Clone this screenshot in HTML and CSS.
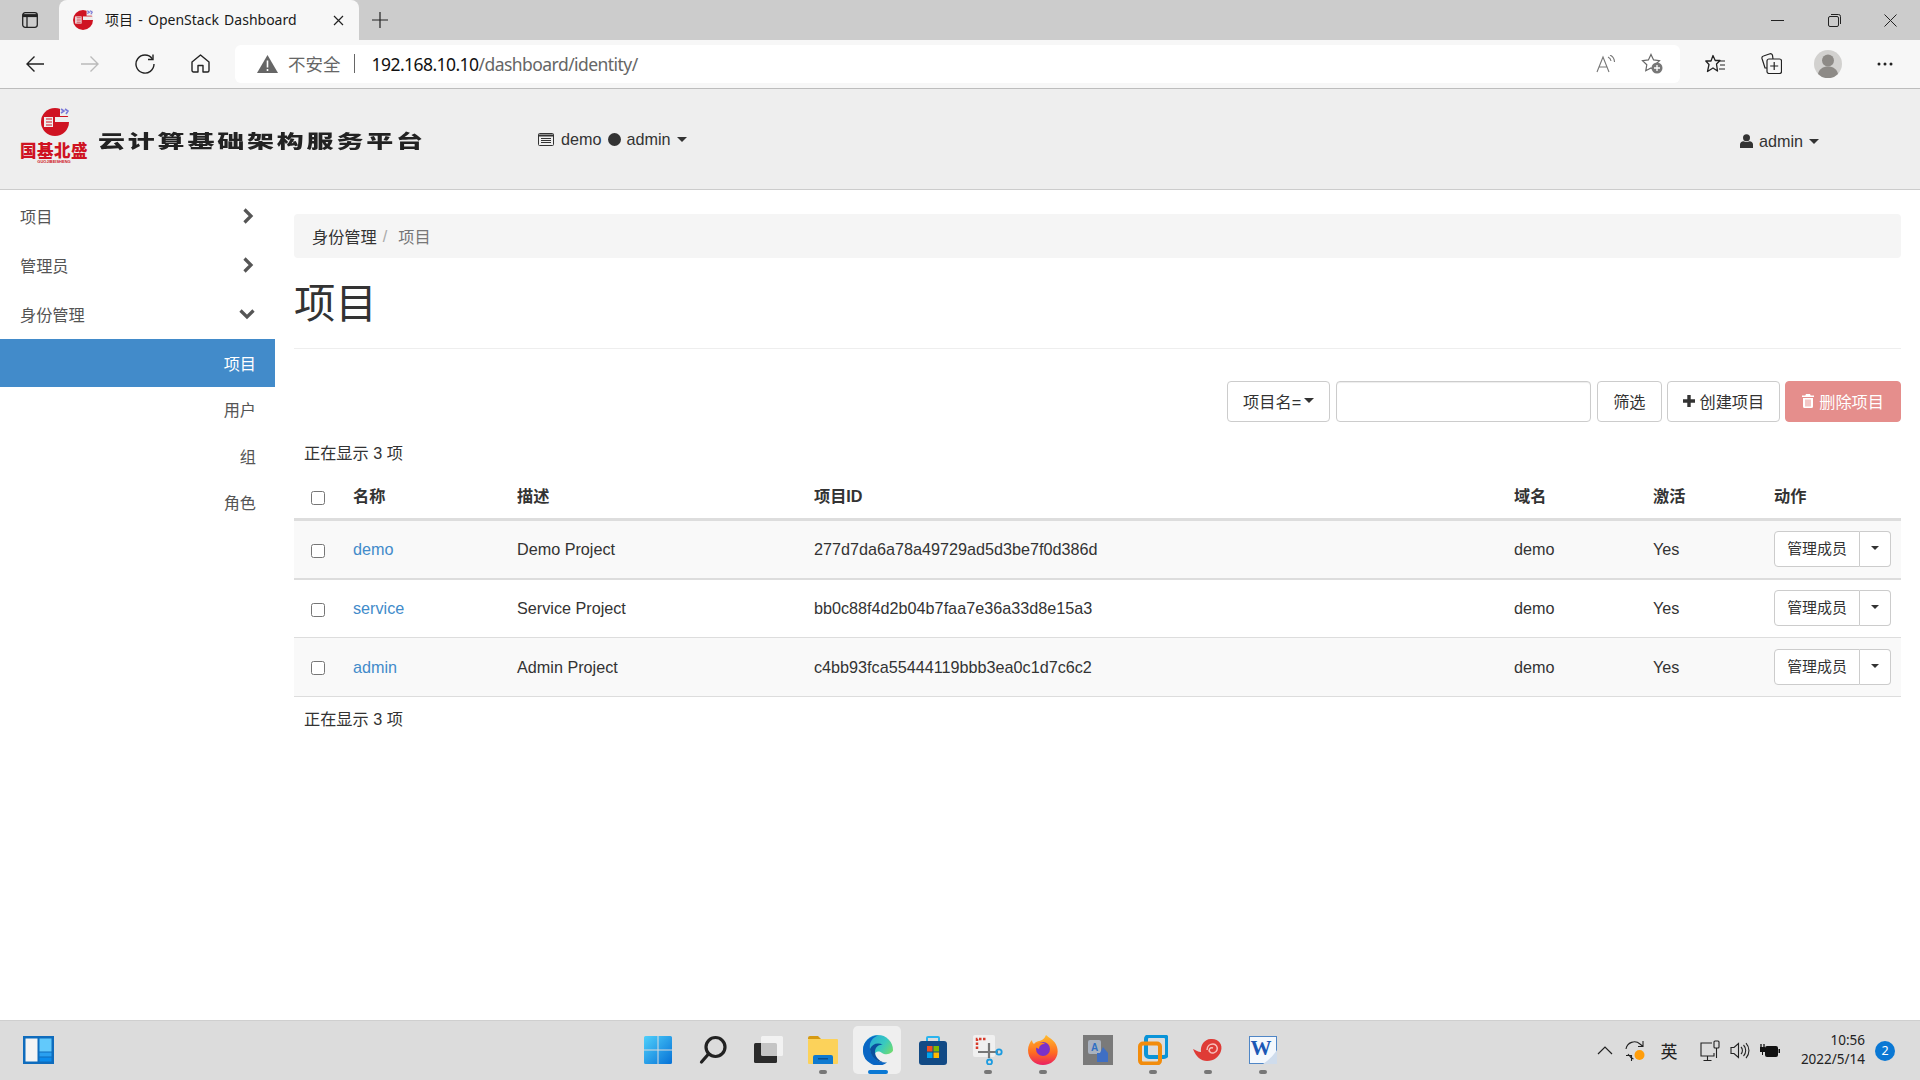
FILE: index.html
```html
<!DOCTYPE html>
<html lang="zh-CN">
<head>
<meta charset="utf-8">
<title>项目 - OpenStack Dashboard</title>
<link rel="stylesheet" href="styles.css">
</head>
<body>
<svg class="defs" width="0" height="0" aria-hidden="true">
  <symbol id="g-mark" viewBox="0 0 28 28">
    <circle cx="14" cy="14" r="14" fill="#cf1322"/>
    <rect x="14" y="9" width="15" height="5" fill="#eee"/>
    <path d="M19 0h9v8h-9z" fill="#eee"/>
    <rect x="3" y="9" width="9" height="10" fill="#eee"/>
    <path d="M5 11h6M5 14h6M5 17h6" stroke="#cf1322" stroke-width="1.2"/>
    <path d="M20 1l3 2-3 2M24 1l3 2-2 3" stroke="#7a78d8" stroke-width="1.6" fill="none"/>
  </symbol>
</svg>

<div class="tabbar">
  <div class="tab-actions">
    <svg width="16" height="16" viewBox="0 0 16 16" fill="none" stroke="#222" stroke-width="1.3"><rect x=".7" y=".7" width="14.6" height="14.6" rx="2.5"/><path d="M.7 3.6h14.6" stroke-width="3"/><path d="M5 4v11"/></svg>
  </div>
  <div class="tab">
    <svg class="favicon" width="20" height="20"><use href="#g-mark"/></svg>
    <span class="tab-title">项目 - OpenStack Dashboard</span>
    <svg class="tab-close" width="11" height="11" viewBox="0 0 11 11" stroke="#222" stroke-width="1.2"><path d="M1 1l9 9M10 1l-9 9"/></svg>
  </div>
  <div class="tab-new">
    <svg width="16" height="16" viewBox="0 0 16 16" stroke="#222" stroke-width="1.2"><path d="M8 0v16M0 8h16"/></svg>
  </div>
  <div class="win-buttons">
    <div class="win-btn"><svg width="13" height="13" viewBox="0 0 13 13" stroke="#222" stroke-width="1"><path d="M0 6.5h13"/></svg></div>
    <div class="win-btn"><svg width="13" height="13" viewBox="0 0 13 13" fill="none" stroke="#222" stroke-width="1"><rect x=".5" y="2.5" width="10" height="10" rx="1.5"/><path d="M3 .5h7.5a2 2 0 0 1 2 2V10"/></svg></div>
    <div class="win-btn"><svg width="13" height="13" viewBox="0 0 13 13" stroke="#222" stroke-width="1"><path d="M.5.5l12 12M12.5.5l-12 12"/></svg></div>
  </div>
</div>

<div class="toolbar">
  <div class="nav-btn"><svg width="20" height="18" viewBox="0 0 20 18" fill="none" stroke="#222" stroke-width="1.4"><path d="M19 9H2M9.500 1.500L2 9l7.500 7.500"/></svg></div>
  <div class="nav-btn"><svg width="20" height="18" viewBox="0 0 20 18" fill="none" stroke="#bbb" stroke-width="1.4"><path d="M1 9h17M10.500 1.500L18 9l-7.500 7.500"/></svg></div>
  <div class="nav-btn"><svg width="20" height="20" viewBox="0 0 20 20" fill="none" stroke="#222" stroke-width="1.4"><path d="M17.300 4.800A9 9 0 1 0 19 10"/><path d="M18 .5v5h-5"/></svg></div>
  <div class="nav-btn"><svg width="19" height="19" viewBox="0 0 19 19" fill="none" stroke="#222" stroke-width="1.4"><path d="M1 8l8.500-7L18 8v8.500a1.500 1.500 0 0 1-1.500 1.500H12v-6.500H7V18H2.500A1.500 1.500 0 0 1 1 16.500z" stroke-linejoin="round"/></svg></div>
  <div class="address">
    <svg class="warn" width="21" height="18" viewBox="0 0 21 18"><path d="M10.500 0L21 18H0z" fill="#666"/><path d="M9.700 5.500h1.600v7H9.700zM9.700 14h1.600v2H9.700z" fill="#fff"/></svg>
    <span class="insecure">不安全</span>
    <span class="addr-sep"></span>
    <span class="url"><span class="url-host">192.168.10.10</span>/dashboard/identity/</span>
    <span class="addr-right">
      <svg width="20" height="18" viewBox="0 0 20 18" fill="none" stroke="#777" stroke-width="1.1"><path d="M1 17L7 2l6 15M3 12h8"/><path d="M12 2a5 5 0 0 1 3 4M14 0a8 8 0 0 1 4.500 7"/></svg>
      <svg width="22" height="21" viewBox="0 0 22 21"><path d="M10 1.500l2.600 5.400 5.900.8-4.300 4.100 1 5.900L10 14.900l-5.200 2.800 1-5.900L1.500 7.700l5.900-.8z" fill="none" stroke="#666" stroke-width="1.2"/><circle cx="16" cy="15" r="5.500" fill="#777"/><path d="M13 15h6M16 12v6" stroke="#fff" stroke-width="1.300"/></svg>
    </span>
  </div>
  <div class="tool-btn tool-first"><svg width="21" height="20" viewBox="0 0 21 20" fill="none" stroke="#222" stroke-width="1.3"><path d="M8 1.500l2.200 5H15l-3.500 3.500 1 7-4.500-3-5.500 3.500L4 10.500.8 7H6z" stroke-linejoin="round"/><path d="M14 7h6M15 11h5M14 15h6" stroke-width="1"/></svg></div>
  <div class="tool-btn"><svg width="21" height="21" viewBox="0 0 21 21" fill="none" stroke="#222" stroke-width="1.2"><rect x="6" y="6" width="14.500" height="14.500" rx="2"/><path d="M13.200 9v8M9.200 13h8"/><path d="M6 15H4L1 5.500A2 2 0 0 1 2.500 3L9 .8a2 2 0 0 1 2.500 1.500L12 6"/></svg></div>
  <div class="tool-btn"><svg width="28" height="28" viewBox="0 0 28 28"><circle cx="14" cy="14" r="14" fill="#d2d1cf"/><circle cx="14" cy="10.500" r="6" fill="#8d8a86"/><path d="M4 24c1-5 5-7.500 10-7.500S23 19 24 24a14 14 0 0 1-20 0z" fill="#8d8a86"/></svg></div>
  <div class="tool-btn"><svg width="16" height="4" viewBox="0 0 16 4" fill="#222"><circle cx="2" cy="2" r="1.500"/><circle cx="8" cy="2" r="1.500"/><circle cx="14" cy="2" r="1.500"/></svg></div>
</div>

<header class="site-header">
  <div class="brand">
    <svg class="brand-logo" width="72" height="56" viewBox="0 0 72 56">
      <use href="#g-mark" x="23" y="0" width="28" height="28"/>
      <text class="logo-cn" x="36" y="49" text-anchor="middle">国基北盛</text>
      <text class="logo-en" x="36" y="55" text-anchor="middle">GUOJIBEISHENG</text>
    </svg>
    <span class="brand-name">云计算基础架构服务平台</span>
  </div>
  <div class="project-menu">
    <svg class="menu-ico" width="16" height="13" viewBox="0 0 16 13"><rect x=".5" y=".5" width="15" height="12" rx="1" fill="none" stroke="#333"/><path d="M.5 2.500h15" stroke="#333" stroke-width="2"/><path d="M3 5.500h10M3 7.500h10M3 9.500h10" stroke="#333"/></svg>
    <span>demo</span><i class="dot"></i><span>admin</span><i class="caret"></i>
  </div>
  <div class="user-menu">
    <svg width="13" height="14" viewBox="0 0 13 14" fill="#333"><circle cx="6.500" cy="3.800" r="3.500"/><path d="M0 14v-3.500C0 8.500 1.500 7.500 3.500 7.200c1.800 1 4.200 1 6 0 2 .3 3.500 1.300 3.500 3.300V14z"/></svg>
    <span>admin</span><i class="caret"></i>
  </div>
</header>

<div class="main">
  <nav class="sidebar">
    <div class="nav-item"><span>项目</span><svg width="12" height="16" viewBox="0 0 12 16" fill="none" stroke="#555" stroke-width="3.200"><path d="M2.500 1.500L9 8l-6.500 6.500"/></svg></div>
    <div class="nav-item"><span>管理员</span><svg width="12" height="16" viewBox="0 0 12 16" fill="none" stroke="#555" stroke-width="3.200"><path d="M2.500 1.500L9 8l-6.500 6.500"/></svg></div>
    <div class="nav-item"><span>身份管理</span><svg class="chev-down" width="16" height="12" viewBox="0 0 16 12" fill="none" stroke="#555" stroke-width="3.200"><path d="M1.500 2.500L8 9l6.500-6.500"/></svg></div>
    <div class="sub-item active">项目</div>
    <div class="sub-item">用户</div>
    <div class="sub-item">组</div>
    <div class="sub-item">角色</div>
  </nav>

  <main class="content">
    <div class="breadcrumb"><span class="crumb">身份管理</span><span class="crumb-sep">/</span><span class="crumb-cur">项目</span></div>
    <div class="page-header"><h1>项目</h1></div>

    <div class="actions">
      <button class="btn">项目名=<i class="caret caret-near"></i></button>
      <input class="filter-input" type="text">
      <button class="btn">筛选</button>
      <button class="btn btn-gap"><svg width="12" height="12" viewBox="0 0 12 12" fill="#333"><path d="M4.300 0h3.400v4.300H12v3.400H7.700V12H4.300V7.700H0V4.300h4.300z"/></svg>创建项目</button>
      <button class="btn btn-gap btn-danger"><svg width="12" height="14" viewBox="0 0 12 14" fill="#fff"><path d="M4 0h4l.7 1.500H12V3H0V1.500h3.300zM1 4h10v8.500A1.500 1.500 0 0 1 9.500 14h-7A1.500 1.500 0 0 1 1 12.500z"/><path d="M4 5.500v7M6 5.500v7M8 5.500v7" stroke="#e58e8c"/></svg>删除项目</button>
    </div>

    <div class="count">正在显示 3 项</div>

    <table class="projects">
      <colgroup>
        <col class="c-check"><col class="c-name"><col class="c-desc"><col class="c-id"><col class="c-domain"><col class="c-active"><col>
      </colgroup>
      <thead>
        <tr><th class="check"><input type="checkbox"></th><th>名称</th><th>描述</th><th>项目ID</th><th>域名</th><th>激活</th><th>动作</th></tr>
      </thead>
      <tbody>
        <tr class="striped first">
          <td class="check"><input type="checkbox"></td><td><a href="#">demo</a></td><td>Demo Project</td><td>277d7da6a78a49729ad5d3be7f0d386d</td><td>demo</td><td>Yes</td>
          <td><div class="row-action"><button class="ra-main">管理成员</button><button class="ra-toggle"><i class="caret"></i></button></div></td>
        </tr>
        <tr>
          <td class="check"><input type="checkbox"></td><td><a href="#">service</a></td><td>Service Project</td><td>bb0c88f4d2b04b7faa7e36a33d8e15a3</td><td>demo</td><td>Yes</td>
          <td><div class="row-action"><button class="ra-main">管理成员</button><button class="ra-toggle"><i class="caret"></i></button></div></td>
        </tr>
        <tr class="striped last">
          <td class="check"><input type="checkbox"></td><td><a href="#">admin</a></td><td>Admin Project</td><td>c4bb93fca55444119bbb3ea0c1d7c6c2</td><td>demo</td><td>Yes</td>
          <td><div class="row-action"><button class="ra-main">管理成员</button><button class="ra-toggle"><i class="caret"></i></button></div></td>
        </tr>
      </tbody>
    </table>

    <div class="count count-bottom">正在显示 3 项</div>
  </main>
</div>

<footer class="taskbar">
  <div class="tb-left">
    <svg width="31" height="28" viewBox="0 0 31 28"><rect width="31" height="28" fill="#0f6cbd"/><rect x="2.500" y="2.500" width="12" height="23" fill="#f4f4f4"/><rect x="16.500" y="2.500" width="12" height="13" fill="#62c9fb"/><rect x="16.500" y="16.500" width="12" height="4" fill="#2aa0f0"/><rect x="16.500" y="21.500" width="12" height="4" fill="#0c8cec"/></svg>
  </div>
  <div class="tb-center">
    <div class="tb-icon"><svg width="30" height="30" viewBox="0 0 30 30"><defs><linearGradient id="w" x1="0" y1="0" x2="1" y2="1"><stop offset="0" stop-color="#4fd0fb"/><stop offset="1" stop-color="#0671d6"/></linearGradient></defs><path d="M1 2.500A1.500 1.500 0 0 1 2.500 1H14.500V14.500H1zM15.500 1H27.500A1.500 1.500 0 0 1 29 2.500V14.500H15.500zM1 15.500H14.500V29H2.500A1.500 1.500 0 0 1 1 27.500zM15.500 15.500H29V27.500A1.500 1.500 0 0 1 27.500 29H15.500z" fill="url(#w)"/></svg></div>
    <div class="tb-icon"><svg width="28" height="30" viewBox="0 0 28 30" fill="none" stroke="#222" stroke-width="3.200" stroke-linecap="round"><circle cx="16.500" cy="12" r="9.500"/><path d="M9.500 19L2.500 27"/></svg></div>
    <div class="tb-icon"><svg width="30" height="30" viewBox="0 0 30 30"><rect x="1" y="8" width="23" height="20" rx="1.500" fill="#2b2b2b"/><rect x="8" y="1" width="22" height="20" rx="1.500" fill="#fafafa" fill-opacity=".75"/></svg></div>
    <div class="tb-icon tb-open"><svg width="30" height="28" viewBox="0 0 30 28"><path d="M0 2a2 2 0 0 1 2-2h8l3 3h-13z" fill="#d69a12"/><rect y="3" width="30" height="25" rx="1" fill="#fcd25a"/><path d="M5 28v-7a2 2 0 0 1 2-2h16a2 2 0 0 1 2 2v7z" fill="#0f7ad0"/><rect x="10" y="22" width="10" height="1.500" fill="#0a4f8f"/></svg></div>
    <div class="tb-icon tb-active"><svg width="30" height="30" viewBox="0 0 30 30"><defs><linearGradient id="e1" x1="0" y1="0" x2="1" y2=".7"><stop offset="0" stop-color="#1f9fe0"/><stop offset=".6" stop-color="#38c9c0"/><stop offset="1" stop-color="#7fe05a"/></linearGradient></defs><circle cx="15" cy="15" r="15" fill="url(#e1)"/><path d="M30.500 15.500C27 20 22 20 19 18 15 15 11 17 12 21 13 26 19 30 26 27L31 31z" fill="#efefef"/><path d="M0 15C0 7 7 .5 15 .5 8 3 6 9 7 14 8 22 15 28.500 24 27.500A15 15 0 0 1 0 15z" fill="#0a66c4"/><path d="M7 14c2-5 8-7 13-4-4-1-8 2-8 7 0 5 4 9 9 10.500C13 27 7.500 21 7 14z" fill="#0b4f9e"/></svg></div>
    <div class="tb-icon"><svg width="30" height="30" viewBox="0 0 30 30" fill="none"><path d="M9 7V3a1 1 0 0 1 1-1h10a1 1 0 0 1 1 1v4" stroke="#2bb4ee" stroke-width="2"/><rect x="1" y="6" width="28" height="24" rx="3" fill="#124a85"/><rect x="9" y="11" width="5.500" height="5.500" fill="#f25022"/><rect x="15.500" y="11" width="5.500" height="5.500" fill="#7fba00"/><rect x="9" y="17.500" width="5.500" height="5.500" fill="#00a4ef"/><rect x="15.500" y="17.500" width="5.500" height="5.500" fill="#ffb900"/></svg></div>
    <div class="tb-icon tb-open"><svg width="30" height="30" viewBox="0 0 30 30" fill="none"><rect x="0" y="0" width="22" height="22" rx="2" fill="#f0f0f0"/><path d="M4 14V4h10" stroke="#d83b2b" stroke-width="2.500" stroke-dasharray="2.500 1.500"/><path d="M16 8v15M5 17h20" stroke="#777" stroke-width="2.200"/><circle cx="26" cy="17" r="2.700" stroke="#1b9be0" stroke-width="1.800"/><circle cx="16.500" cy="27" r="2.500" stroke="#1b9be0" stroke-width="1.800"/></svg></div>
    <div class="tb-icon tb-open"><svg width="30" height="30" viewBox="0 0 30 30"><defs><linearGradient id="ff" x1="0" y1="0" x2="0" y2="1"><stop offset="0" stop-color="#ffbd2e"/><stop offset=".6" stop-color="#ff6a21"/><stop offset="1" stop-color="#ea1f63"/></linearGradient></defs><path d="M18 0c3 3 9 5 11 12 3 11-5 18-14 18C7 30 0 24 0 15 0 11 2 7 4 5c0 2 1 3 2 4 2-3 6-3 8-4 2-1 3-3 4-5z" fill="url(#ff)"/><circle cx="15" cy="14" r="7" fill="#7a31c9"/><path d="M6 10c3-3 8-3 11-1-4 0-6 2-6 5-2-1-4-2-5-4z" fill="#ff8a1e"/></svg></div>
    <div class="tb-icon"><svg width="30" height="30" viewBox="0 0 30 30"><rect width="30" height="30" fill="#7a7a7a"/><rect x="5" y="5" width="13" height="14" rx="2" fill="#a9b2bf"/><text class="ime-a" x="11.500" y="16" text-anchor="middle">A</text><path d="M14 18h11v9h-11z" fill="#3f6fc4"/><path d="M20 12l5 6h-8z" fill="#3f6fc4"/></svg></div>
    <div class="tb-icon tb-open"><svg width="30" height="30" viewBox="0 0 30 30" fill="none"><rect x="8" y="1" width="21" height="21" rx="3" stroke="#0a94d8" stroke-width="4"/><rect x="2" y="8.500" width="20" height="20" rx="3" stroke="#f28c0c" stroke-width="4"/></svg></div>
    <div class="tb-icon tb-open"><svg width="30" height="26" viewBox="0 0 30 26" fill="none"><path d="M0 12c3 1 5 3 8 3-1-7 4-14 11-13 7 0 11 6 9 12-2 6-7 10-14 10C8 24 3 20 0 12z" fill="#df3b36"/><path d="M14 13c0-4 3-6 6-6s5 3 4 6-5 4-7 2 0-5 3-4" stroke="#f7bfbb" stroke-width="1.500"/></svg></div>
    <div class="tb-icon tb-open"><svg width="28" height="28" viewBox="0 0 28 28"><rect x=".5" y=".5" width="27" height="27" fill="#f4f8fd" stroke="#4f86c6"/><path d="M14 28c5-3 9-7 14-14v14z" fill="#cfdcec"/><text class="word-w" x="12" y="19" text-anchor="middle">W</text></svg></div>
  </div>
  <div class="tb-right">
    <div class="tray"><svg width="16" height="9" viewBox="0 0 16 9" fill="none" stroke="#222" stroke-width="1.200"><path d="M1 8l7-7 7 7"/></svg></div>
    <div class="tray"><svg width="21" height="22" viewBox="0 0 21 22" fill="none"><path d="M1 9a8.500 8.500 0 0 1 14-5l3 2.500M18 1v5.500h-5M3 14l2.500 3a8 8 0 0 0 3 2M1 15.500h5.500V21" stroke="#222" stroke-width="1.100"/><circle cx="14.500" cy="15" r="5" fill="#ff9d0a"/></svg></div>
    <div class="tray tray-lang">英</div>
    <div class="tray tray-monitor"><svg width="20" height="21" viewBox="0 0 20 21" fill="none" stroke="#222" stroke-width="1.100"><path d="M12 3H1v13h13v-3M7.500 16v4M3.500 20.500h8"/><rect x="14" y="1" width="5" height="7" rx="1"/><path d="M16.500 8v10"/></svg></div>
    <div class="tray"><svg width="20" height="17" viewBox="0 0 20 17" fill="none" stroke="#222" stroke-width="1.100"><path d="M1 5.500h3L8.500 1.500v14L4 11.500H1zM11 5a5 5 0 0 1 0 7M13.500 3a8 8 0 0 1 0 11M16 1a11 11 0 0 1 0 15"/></svg></div>
    <div class="tray"><svg width="20" height="14" viewBox="0 0 20 14"><path d="M1 3V0M4 3V0" stroke="#111" stroke-width="1.300"/><rect y="3" width="5" height="5" fill="#111"/><path d="M2.500 8v3" stroke="#111"/><path d="M5 4a2 2 0 0 1 2-2h9a2 2 0 0 1 2 2v7a2 2 0 0 1-2 2H7a2 2 0 0 1-2-2z" fill="#111"/><rect x="18.500" y="5" width="1.500" height="4" fill="#111"/></svg></div>
    <div class="clock"><div>10:56</div><div>2022/5/14</div></div>
    <div class="badge">2</div>
  </div>
</footer>
</body>
</html>
```

FILE: styles.css
```css
* { box-sizing: border-box; }
html, body { margin: 0; height: 100%; }
body {
  width: 1920px; height: 1080px; overflow: hidden;
  display: flex; flex-direction: column;
  font-family: "Liberation Sans", "Noto Sans CJK SC", sans-serif;
  font-size: 16.2px; color: #333; background: #fff;
}
.defs { position: absolute; }

/* browser chrome */
.tabbar { height: 40px; background: #ccc; display: flex; flex: none; }
.tab-actions { width: 59px; display: flex; align-items: center; justify-content: center; }
.tab {
  width: 300px; background: #f7f7f7; border-radius: 8px 8px 0 0;
  display: flex; align-items: center; padding: 0 15px 0 14px;
  font-family: "Noto Sans", "Noto Sans CJK SC", sans-serif; font-size: 14px; color: #1a1a1a;
}
.favicon { flex: none; }
.tab-title { margin-left: 12px; flex: 1; white-space: nowrap; word-spacing: 1.600px; padding-bottom: 2px; }
.tab-new { width: 42px; display: flex; align-items: center; justify-content: center; }
.win-buttons { margin-left: auto; display: flex; padding-right: 1px; }
.win-btn { width: 56.500px; display: flex; align-items: center; justify-content: center; }

.toolbar { height: 49px; flex: none; background: #f7f7f7; border-bottom: 1px solid #bdbdbd; display: flex; align-items: center; padding: 0 0 1px 7.500px; }
.nav-btn { width: 55px; display: flex; justify-content: center; }
.address {
  width: 1445px; height: 38px; margin-left: 7.500px; background: #fff; border-radius: 6px;
  display: flex; align-items: center; padding-left: 22px;
  font-family: "Noto Sans", "Noto Sans CJK SC", sans-serif; font-size: 17.500px; color: #666;
}
.insecure { margin-left: 10px; }
.addr-sep { width: 1px; height: 19px; background: #666; margin: 0 17px 0 13px; }
.url { white-space: nowrap; font-size: 17.500px; letter-spacing: -.55px; }
.url-host { color: #111; }
.addr-right { margin-left: auto; display: flex; align-items: center; gap: 25px; padding-right: 17px; }
.tool-btn { width: 56.670px; display: flex; justify-content: center; }
.tool-first { margin-left: 6.700px; }

/* site header */
.site-header { height: 101px; flex: none; background: #eee; border-bottom: 1px solid #ccc; display: flex; }
.brand { width: 538px; padding: 19px 0 0 18px; display: flex; align-items: flex-start; }
.brand-logo { flex: none; }
.logo-cn { font: 900 16.500px "Noto Sans CJK SC", sans-serif; fill: #cf1322; letter-spacing: .5px; }
.logo-en { font: 700 4px "Liberation Sans", sans-serif; fill: #cf1322; }
.brand-name {
  display: inline-block; margin: 17px 0 0 8px; white-space: nowrap;
  font: 900 27px/32px "Noto Sans CJK SC", sans-serif; letter-spacing: 2.800px; color: #222;
  transform: scaleY(.68); filter: blur(.3px);
}
.project-menu { display: flex; align-items: center; height: 22px; margin-top: 39px; color: #333; }
.menu-ico { margin-right: 7px; }
.dot { width: 13px; height: 13px; border-radius: 50%; background: #333; margin: 0 6px; }
.caret { display: inline-block; width: 0; height: 0; border-left: 5px solid transparent; border-right: 5px solid transparent; border-top: 5px solid #333; margin-left: 6px; }
.user-menu { margin-left: auto; margin-right: 101px; display: flex; align-items: center; gap: 6px; height: 22px; margin-top: 41px; }
.user-menu .caret { margin-left: 0; }

/* layout */
.main { flex: 1; display: flex; min-height: 0; }
.sidebar { width: 275px; flex: none; padding-top: 2px; color: #555; }
.nav-item { height: 49px; display: flex; align-items: center; justify-content: space-between; padding: 0 21px 2px 20px; }
.chev-down { margin-right: -1px; }
.sub-item { height: 46.600px; display: flex; align-items: center; justify-content: flex-end; padding: 0 19px 2px 0; }
.sub-item.active { height: 48px; background: #428bca; color: #fff; padding-bottom: 0; }

.content { flex: 1; min-width: 0; margin: 0 19px; padding-top: 24px; }
.breadcrumb { height: 44px; background: #f5f5f5; border-radius: 4px; display: flex; align-items: center; padding-left: 18px; }
.crumb { color: #333; }
.crumb-sep { color: #aaa; margin: 0 11px 0 6px; }
.crumb-cur { color: #777; }
.page-header { height: 91px; border-bottom: 1px solid #eee; }
h1 { margin: 0; font-size: 41.400px; font-weight: 400; line-height: 92px; color: #333; }

.actions { margin-top: 32px; display: flex; justify-content: flex-end; align-items: stretch; height: 41px; gap: 6px; }
.btn {
  font: inherit; color: #333; background: #fff; border: 1px solid #ccc; border-radius: 4px;
  padding: 0 15px 2px; display: flex; align-items: center; gap: 3px; white-space: nowrap;
}
.btn-gap { margin-left: -1px; gap: 5px; }
.caret-near { margin-left: 0; }
.btn-danger { background: #e58e8c; border-color: #e58e8c; color: #fff; padding: 0 16px 2px; }
.filter-input { width: 255px; border: 1px solid #ccc; border-radius: 4px; background: #fff; box-shadow: inset 0 1px 1px rgba(0,0,0,.075); }

.count { margin-top: 20px; height: 22px; line-height: 22px; padding-left: 10px; color: #333; }
.count-bottom { margin-top: 11px; }

.projects { width: 100%; table-layout: fixed; border-collapse: separate; border-spacing: 0; margin-top: 10px; }
.c-check { width: 50px; } .c-name { width: 164px; } .c-desc { width: 297px; }
.c-id { width: 700px; } .c-domain { width: 139px; } .c-active { width: 121px; }
.projects th { height: 47px; padding: 0 9px 2px; text-align: left; font-weight: 700; border-bottom: 3px solid #ddd; }
.projects td { height: 58px; padding: 0 9px; border-bottom: 1px solid #ddd; }
.projects .first td { height: 59px; border-bottom-width: 2px; }
.projects .last td { height: 59px; }
.projects .check { padding: 0 0 0 17px; }
.check input { display: block; width: 14px; height: 14px; margin: 2px 0 0; }
th.check input { margin-top: 4px; }
.striped td { background: #f9f9f9; }
a { color: #428bca; text-decoration: none; }

.row-action { display: flex; height: 36px; width: 117px; margin-bottom: 1px; }
.last .row-action { margin-bottom: 0; }
.row-action button { font: 14.950px "Liberation Sans", "Noto Sans CJK SC", sans-serif; color: #333; background: #fff; border: 1px solid #ccc; padding: 0 0 3px; }
.ra-main { width: 86px; border-radius: 4px 0 0 4px; }
.ra-toggle { flex: 1; border-left: 0 !important; border-radius: 0 4px 4px 0; display: flex; align-items: center; justify-content: center; }
.ra-toggle .caret { margin: 0; border-width: 4.500px 4.500px 0; }

/* taskbar */
.taskbar {
  height: 60px; flex: none; background: #dcdcdc; border-top: 1px solid #cfcfcf;
  display: grid; grid-template-columns: 1fr auto 1fr; align-items: center;
  font-family: "Noto Sans", "Noto Sans CJK SC", sans-serif;
}
.tb-left { padding: 0 0 2px 23px; display: flex; }
.tb-center { display: flex; }
.tb-icon { width: 55px; height: 59px; padding-bottom: 2px; display: flex; align-items: center; justify-content: center; position: relative; }
.tb-open::after { content: ""; position: absolute; left: 23.500px; bottom: 6px; width: 8px; height: 4px; border-radius: 2px; background: #777; }
.tb-active::before { content: ""; position: absolute; left: 3px; top: 5px; width: 48px; height: 48px; border-radius: 5px; background: #efefef; }
.tb-active::after { content: ""; position: absolute; left: 17.500px; bottom: 6px; width: 20px; height: 4px; border-radius: 2px; background: #0a78d4; }
.tb-active svg { position: relative; }
.ime-a { font: 700 10px "Liberation Sans", sans-serif; fill: #2f6fc4; }
.word-w { font: 900 21px "Liberation Serif", serif; fill: #1a57b5; }
.tb-right { display: flex; align-items: center; justify-content: flex-end; padding-right: 25px; }
.tray { width: 30px; display: flex; justify-content: center; color: #222; }
.tray-lang { width: 38px; font-size: 17px; font-family: "Noto Sans CJK SC", sans-serif; }
.tray-monitor { margin-left: 7px; }
.clock { width: 80px; text-align: right; font-size: 13.500px; line-height: 19px; color: #222; padding-bottom: 2px; }
.badge { width: 20px; height: 20px; margin-left: 10px; border-radius: 50%; background: #0a78d4; color: #fff; font-size: 12.500px; display: flex; align-items: center; justify-content: center; }
```
